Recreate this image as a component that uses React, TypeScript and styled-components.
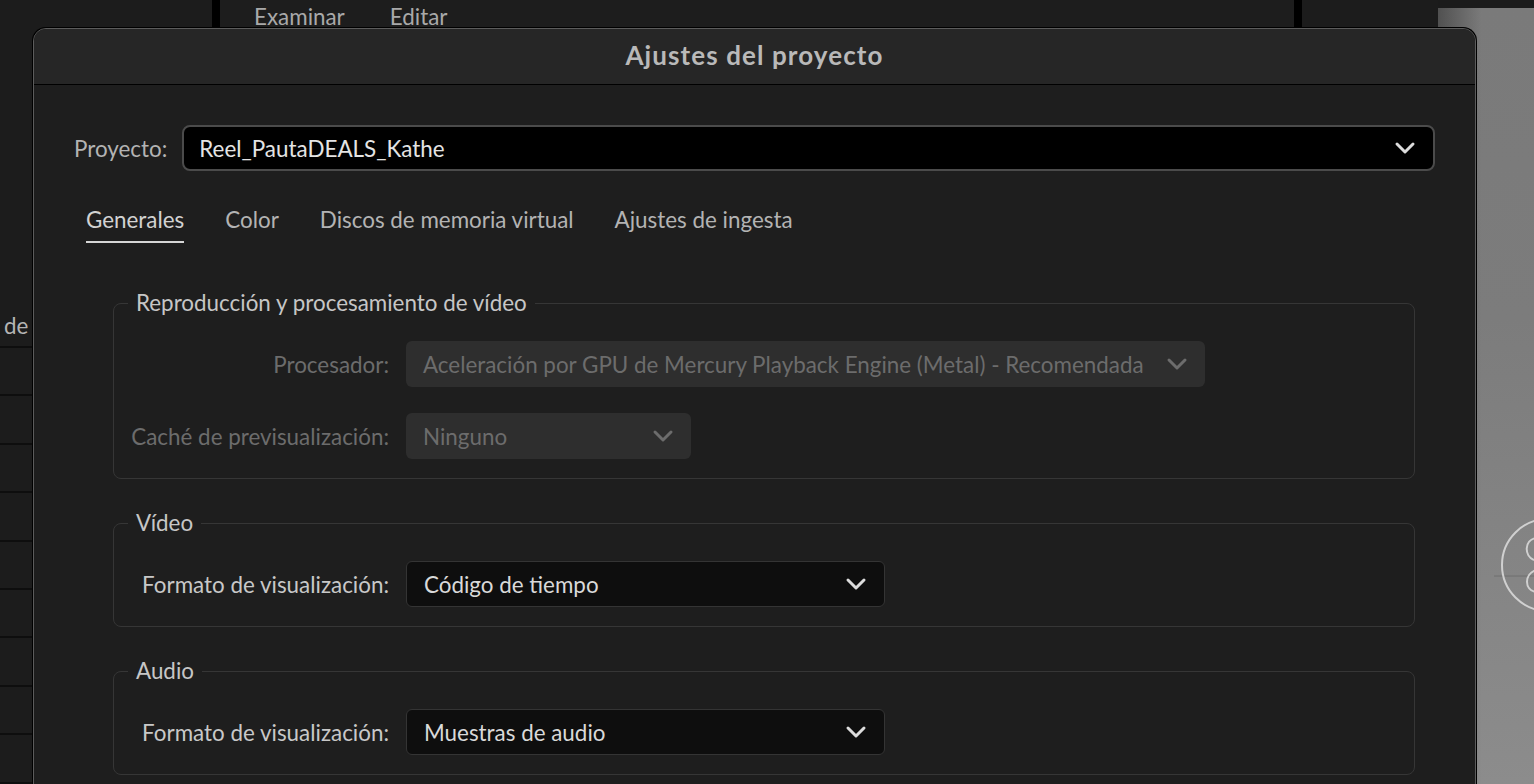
import styled, { createGlobalStyle } from "styled-components";

const GlobalStyle = createGlobalStyle`
  html, body {
    margin: 0;
    padding: 0;
    background: #1b1b1b;
    overflow: hidden;
  }
  * {
    box-sizing: border-box;
  }
`;

const Page = styled.div`
  position: relative;
  width: 1534px;
  height: 784px;
  overflow: hidden;
  display: flex;
  font-family: Lato, "Open Sans", sans-serif;
  font-size: 22.4px;
  background: #1b1b1b;
`;

const LeftPanel = styled.div`
  width: 212px;
  background: #1c1c1c;
  display: flex;
  flex-direction: column;
`;

const LeftHeader = styled.div`
  height: 348px;
  display: flex;
  align-items: flex-end;
  padding: 0 0 7px 4px;
  color: #b4b4b4;
  border-bottom: 2px solid #0e0e0e;
`;

const LeftRow = styled.div`
  height: 48.4px;
  flex: none;
  border-bottom: 2px solid #0e0e0e;
`;

const Divider = styled.div`
  width: 8px;
  background: #000;
`;

const CenterPanel = styled.div`
  flex: 1;
  background: #1d1d1d;
  display: flex;
  gap: 45px;
  padding: 3px 0 0 34px;
  align-items: flex-start;
`;

const PanelTab = styled.span`
  color: #a9a9a9;
  line-height: 28px;
`;

const RightPanel = styled.div`
  width: 136px;
  background: #1c1c1c;
`;

const ImageArea = styled.div`
  position: relative;
  width: 96px;
  margin-top: 8px;
  background: linear-gradient(90deg, rgba(30, 30, 30, 0.45) 0%, rgba(0, 0, 0, 0) 45%),
    linear-gradient(180deg, #7a7a7a 0%, #7c7c7c 40%, #8c8c8c 100%);
  overflow: hidden;
`;

const Dial = styled.svg`
  position: absolute;
  left: 56px;
  top: 490px;
`;

const Dialog = styled.div`
  position: absolute;
  left: 33px;
  top: 28px;
  width: 1443px;
  height: 800px;
  border: 1px solid #5c5c5c;
  border-radius: 13px 13px 0 0;
  box-shadow: 0 0 0 1px #000;
  background: #1e1e1e;
  overflow: hidden;
  display: flex;
  flex-direction: column;
`;

const TitleBar = styled.div`
  height: 56px;
  flex: none;
  padding-bottom: 3px;
  background: #262626;
  border-bottom: 1px solid #000;
  display: flex;
  align-items: center;
  justify-content: center;
  color: #b9b9b9;
  font-size: 26px;
  font-weight: 700;
  letter-spacing: 1.1px;
`;

const Body = styled.div`
  padding: 40px 40px 0 40px;
  display: flex;
  flex-direction: column;
`;

const ProjectRow = styled.div`
  display: flex;
  align-items: center;
  gap: 15px;
`;

const ProjectLabel = styled.span`
  color: #b3b3b3;
`;

const Select = styled.div<{ $width?: number; $variant: "project" | "normal" | "disabled" }>`
  height: 46px;
  width: ${(p) => (p.$width ? `${p.$width}px` : "auto")};
  flex: ${(p) => (p.$width ? "none" : "1")};
  display: flex;
  align-items: center;
  justify-content: space-between;
  padding: 0 17px 0 ${(p) => (p.$variant === "project" ? "15px" : "17px")};
  border-radius: ${(p) => (p.$variant === "project" ? "8px" : "6px")};
  background: ${(p) =>
    p.$variant === "project" ? "#000" : p.$variant === "normal" ? "#0e0e0e" : "#2e2e2e"};
  border: ${(p) =>
    p.$variant === "project"
      ? "2px solid #4b4b4b"
      : p.$variant === "normal"
      ? "1.5px solid #343434"
      : "none"};
  color: ${(p) =>
    p.$variant === "project" ? "#e4e4e4" : p.$variant === "normal" ? "#d9d9d9" : "#6c6c6c"};
  svg {
    stroke: ${(p) => (p.$variant === "disabled" ? "#6c6c6c" : "#dcdcdc")};
  }
`;

const TabBar = styled.div`
  display: flex;
  gap: 41px;
  margin-top: 36px;
  padding-left: 12px;
`;

const Tab = styled.div<{ $active?: boolean }>`
  line-height: 26px;
  padding-bottom: 8px;
  color: ${(p) => (p.$active ? "#d2d2d2" : "#b3b3b3")};
  border-bottom: 2px solid ${(p) => (p.$active ? "#d6d6d6" : "transparent")};
`;

const Sections = styled.div`
  display: flex;
  flex-direction: column;
  gap: 32px;
  margin: 48px 20px 0 39px;
`;

const Group = styled.fieldset`
  margin: 0;
  border: 1.5px solid #363636;
  border-radius: 8px;
  padding: 26px 14px 19px 14px;
  display: flex;
  flex-direction: column;
  gap: 26px;
`;

const Legend = styled.legend`
  padding: 0 8px;
  line-height: 24px;
  color: #c6c6c6;
`;

const Row = styled.div`
  display: flex;
  align-items: center;
  gap: 17px;
`;

const Label = styled.span<{ $disabled?: boolean }>`
  width: 261px;
  text-align: right;
  white-space: nowrap;
  color: ${(p) => (p.$disabled ? "#6c6c6c" : "#c8c8c8")};
`;

const Chevron = () => (
  <svg width="22" height="14" viewBox="0 0 22 14" fill="none" strokeWidth="3" strokeLinecap="round" strokeLinejoin="round">
    <path d="M3 3 L11 11 L19 3" />
  </svg>
);

export default function App() {
  const rows = Array.from({ length: 9 });
  return (
    <>
      <GlobalStyle />
      <Page>
        <LeftPanel>
          <LeftHeader>de</LeftHeader>
          {rows.map((_, i) => (
            <LeftRow key={i} />
          ))}
        </LeftPanel>
        <Divider />
        <CenterPanel>
          <PanelTab>Examinar</PanelTab>
          <PanelTab>Editar</PanelTab>
        </CenterPanel>
        <Divider />
        <RightPanel />
        <ImageArea>
          <Dial width="100" height="140" viewBox="0 0 100 140">
            <line x1="0" y1="78" x2="100" y2="78" stroke="#6f6f6f" strokeWidth="1" />
            <circle cx="54" cy="67" r="46" fill="none" stroke="#d0d0d0" strokeWidth="2" />
            <path d="M40 62 C 30 58, 30 42, 42 40" fill="none" stroke="#d0d0d0" strokeWidth="2" />
            <path d="M42 72 C 30 76, 30 92, 42 94" fill="none" stroke="#d0d0d0" strokeWidth="2" />
          </Dial>
        </ImageArea>

        <Dialog>
          <TitleBar>Ajustes del proyecto</TitleBar>
          <Body>
            <ProjectRow>
              <ProjectLabel>Proyecto:</ProjectLabel>
              <Select $variant="project">
                <span>Reel_PautaDEALS_Kathe</span>
                <Chevron />
              </Select>
            </ProjectRow>

            <TabBar>
              <Tab $active>Generales</Tab>
              <Tab>Color</Tab>
              <Tab>Discos de memoria virtual</Tab>
              <Tab>Ajustes de ingesta</Tab>
            </TabBar>

            <Sections>
              <Group>
                <Legend>Reproducción y procesamiento de vídeo</Legend>
                <Row>
                  <Label $disabled>Procesador:</Label>
                  <Select $variant="disabled" $width={799}>
                    <span>Aceleración por GPU de Mercury Playback Engine (Metal) - Recomendada</span>
                    <Chevron />
                  </Select>
                </Row>
                <Row>
                  <Label $disabled>Caché de previsualización:</Label>
                  <Select $variant="disabled" $width={285}>
                    <span>Ninguno</span>
                    <Chevron />
                  </Select>
                </Row>
              </Group>

              <Group>
                <Legend>Vídeo</Legend>
                <Row>
                  <Label>Formato de visualización:</Label>
                  <Select $variant="normal" $width={479}>
                    <span>Código de tiempo</span>
                    <Chevron />
                  </Select>
                </Row>
              </Group>

              <Group>
                <Legend>Audio</Legend>
                <Row>
                  <Label>Formato de visualización:</Label>
                  <Select $variant="normal" $width={479}>
                    <span>Muestras de audio</span>
                    <Chevron />
                  </Select>
                </Row>
              </Group>
            </Sections>
          </Body>
        </Dialog>
      </Page>
    </>
  );
}
